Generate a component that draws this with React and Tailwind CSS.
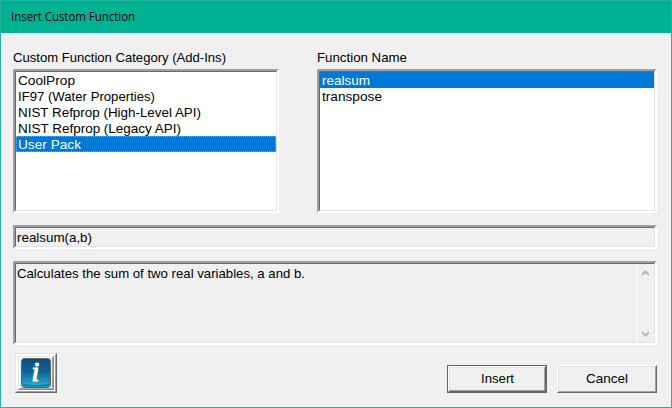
const sunkenOuter = "border-2 border-t-[#a0a0a0] border-l-[#a0a0a0] border-r-white border-b-white";
const sunkenInner = "h-full w-full border border-t-[#696969] border-l-[#696969] border-r-[#e3e3e3] border-b-[#e3e3e3]";

function Sunken({ className, innerClassName = "", children }) {
  return (
    <div className={`${sunkenOuter} ${className}`}>
      <div className={`${sunkenInner} ${innerClassName}`}>{children}</div>
    </div>
  );
}

function Text({ children, width, baseline = 13, className = "" }) {
  return (
    <svg className={`block h-4 overflow-visible ${className}`} width={width}>
      <text x="0" y={baseline} textLength={width} lengthAdjust="spacingAndGlyphs" fill="currentColor">{children}</text>
    </svg>
  );
}

const categories = [
  ["CoolProp", 57],
  ["IF97 (Water Properties)", 137],
  ["NIST Refprop (High-Level API)", 183],
  ["NIST Refprop (Legacy API)", 163],
  ["User Pack", 63],
];

function RaisedButton({ children, width, focused }) {
  const face = "flex h-full w-full items-center justify-center border border-t-[#e3e3e3] border-l-[#e3e3e3] border-r-[#a0a0a0] border-b-[#a0a0a0]";
  const rim = "h-full w-full border border-t-white border-l-white border-r-[#696969] border-b-[#696969]";
  return (
    <button className={`block h-7 w-[100px] ${focused ? "border border-[#646464]" : ""}`}>
      <span className={`block ${rim}`}>
        <span className={face}><Text width={width} baseline={12}>{children}</Text></span>
      </span>
    </button>
  );
}

function InfoButton() {
  return (
    <button className="block h-10 w-[42px] border border-t-[#e3e3e3] border-l-[#e3e3e3] border-r-[#696969] border-b-[#696969]">
      <span className="block h-full w-full border border-t-white border-l-white border-r-[#a0a0a0] border-b-[#a0a0a0]">
        <span className="block h-full w-full border border-white">
          <span className="block h-full w-full border border-t-[#e3e3e3] border-l-[#e3e3e3] border-r-[#8c8c8c] border-b-[#8c8c8c]">
            <span className="flex h-full w-full items-center justify-center border border-t-white border-l-white border-r-[#a0a0a0] border-b-[#a0a0a0]">
              <svg className="shrink-0 overflow-visible" width="30" height="30" viewBox="0 0 30 30">
                <defs>
                  <linearGradient id="info" x1="0" y1="0" x2="0" y2="1">
                    <stop offset="0" stopColor="#0b4f80" />
                    <stop offset=".45" stopColor="#0f6496" />
                    <stop offset=".8" stopColor="#1f93bf" />
                    <stop offset="1" stopColor="#35bfe0" />
                  </linearGradient>
                </defs>
                <rect x=".5" y=".5" width="29" height="29" rx="3" fill="url(#info)" stroke="#5c6468" />
                <path d="M1.5 25.5Q15 28.5 28.5 25.5V27Q28 28.7 26 28.8H4Q2 28.7 1.5 27Z" fill="#1580ac" />
                <text x="14.5" y="23.3" textAnchor="middle" fill="white" stroke="white" strokeWidth="1.2" className="font-['Liberation_Serif',serif] text-[28px] italic">i</text>
              </svg>
            </span>
          </span>
        </span>
      </span>
    </button>
  );
}

export default function App() {
  return (
    <div className="flex h-[408px] w-[672px] flex-col border border-[#1fb5a0] bg-[#f0f0f0] font-['Liberation_Sans',Arial,sans-serif] text-[13.333px] text-black">
      <header className="flex h-8 shrink-0 items-center bg-[#00b294] pl-[10px] font-['Open_Sans','Noto_Sans',sans-serif] text-[12.5px]">
        <Text width={124} baseline={12}>Insert Custom Function</Text>
      </header>
      <main className="flex flex-col pr-[14px] pl-3">
        <div className="mt-4 flex h-5 gap-[38px]">
          <div className="w-[266px]"><Text width={213}>Custom Function Category (Add-Ins)</Text></div>
          <div><Text width={90}>Function Name</Text></div>
        </div>
        <div className="flex gap-[38px]">
          <Sunken className="h-36 w-[266px]" innerClassName="bg-white">
            {categories.map(([name, width]) =>
              name === "User Pack" ? (
                <div key={name} className="h-4 border border-dotted border-[#ff8728] bg-[#0078d7] pl-px text-white">
                  <Text width={width} className="-mt-px">{name}</Text>
                </div>
              ) : (
                <div key={name} className="h-4 pl-[2px]">
                  <Text width={width}>{name}</Text>
                </div>
              )
            )}
          </Sunken>
          <Sunken className="h-36 w-[340px]" innerClassName="bg-white">
            <div className="h-4 bg-[#0078d7] pl-[2px] text-white"><Text width={48}>realsum</Text></div>
            <div className="h-4 pl-[2px]"><Text width={60}>transpose</Text></div>
          </Sunken>
        </div>
        <Sunken className="mt-3 h-6" innerClassName="pl-px pt-px"><Text width={75}>realsum(a,b)</Text></Sunken>
        <Sunken className="mt-3 h-[84px]" innerClassName="flex justify-between pl-px">
          <Text width={288} className="mt-px">Calculates the sum of two real variables, a and b.</Text>
          <div className="flex w-[17px] flex-col items-start justify-between border-l border-white pt-[6px] pb-[5px] pl-1">
            <svg width="7" height="6" viewBox="0 0 7 6"><path d="M0 3.5 3.5 0 7 3.5V6L3.5 3 0 6Z" fill="#b8b8b8" /></svg>
            <svg width="7" height="6" viewBox="0 0 7 6"><path d="M0 2.5 3.5 6 7 2.5V0L3.5 3 0 0Z" fill="#b8b8b8" /></svg>
          </div>
        </Sunken>
        <div className="mt-2 flex items-end justify-between pl-[2px]">
          <InfoButton />
          <div className="flex gap-[10px]">
            <RaisedButton width={33} focused>Insert</RaisedButton>
            <RaisedButton width={42}>Cancel</RaisedButton>
          </div>
        </div>
      </main>
    </div>
  );
}
